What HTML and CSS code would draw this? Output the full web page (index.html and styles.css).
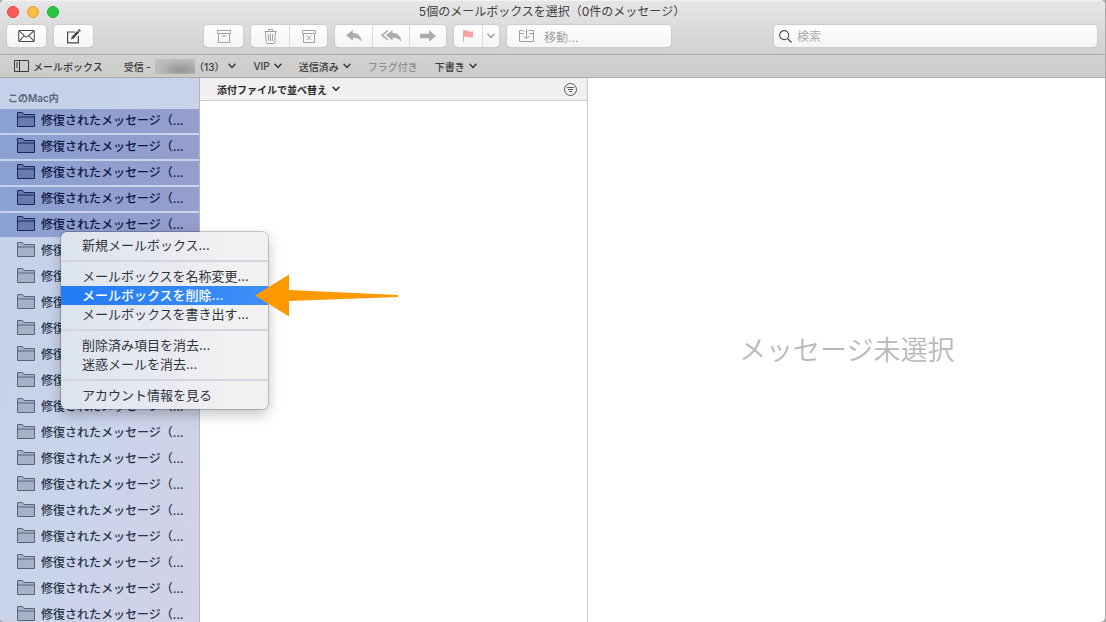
FILE: index.html
```
<!DOCTYPE html>
<html lang="ja">
<head>
    <meta charset="UTF-8">
    <meta name="viewport" content="width=device-width, initial-scale=1.0">
    <title>メール</title>
    <link rel="stylesheet" href="styles.css">
</head>
<body>
    <svg class="symbols" aria-hidden="true">
        <symbol id="folder" viewBox="0 0 18 15">
            <path d="M.5 14.5V.5H5.5L7 2.5H17.5V14.5Z" fill="currentColor" fill-opacity=".3" stroke="currentColor"/>
            <path d="M.5 5H17.5" stroke="currentColor"/>
        </symbol>
        <symbol id="chevron" viewBox="0 0 8 6">
            <path d="M1 1.2L4 4.4L7 1.2" fill="none" stroke="currentColor" stroke-width="1.5" stroke-linecap="round"/>
        </symbol>
    </svg>
    <div class="window">
        <header class="titlebar">
            <div class="title-row">
                <div class="lights">
                    <button class="light red" aria-label="閉じる"></button>
                    <button class="light yellow" aria-label="しまう"></button>
                    <button class="light green" aria-label="拡大"></button>
                </div>
                <h1 class="title">5個のメールボックスを選択（0件のメッセージ）</h1>
            </div>
            <div class="toolbar">
                <button class="tool dark" aria-label="受信">
                    <svg width="17" height="12" viewBox="0 0 18 13" fill="none" stroke="currentColor" stroke-width="1.1"><rect x=".6" y=".6" width="16.8" height="11.8" rx="1"/><path d="M1 1L7.5 7Q9 8.3 10.5 7L17 1M1 12L6.3 6.2M17 12L11.7 6.2"/></svg>
                </button>
                <button class="tool dark" aria-label="新規メッセージ">
                    <svg width="16" height="15" viewBox="0 0 16 15" fill="none" stroke="currentColor" stroke-width="1.2"><path d="M9 3H1.6V13.9H12.4V7"/><path d="M6.2 9.2L12.3 2.7" stroke-width="2.6"/><path d="M12.8 2.2L14 .9" stroke-width="2.6"/><path d="M4.8 10.6L7.3 9.8L5.8 8.2Z" fill="currentColor" stroke="none"/></svg>
                </button>
                <button class="tool archive" aria-label="アーカイブ">
                    <svg width="14" height="13" viewBox="0 0 14 13" fill="none" stroke="currentColor"><path d="M.5 .5H13.5V3.5H.5ZM1.5 3.5V12.5H12.5V3.5M4.5 6H9.5"/></svg>
                </button>
                <div class="group">
                    <button class="tool" aria-label="削除">
                        <svg width="13" height="15" viewBox="0 0 13 15" fill="none" stroke="currentColor"><path d="M.5 2.5H12.5M4.5 2.5V.5H8.5V2.5M1.5 2.5L2.2 13.4Q2.3 14.5 3.3 14.5H9.7Q10.7 14.5 10.8 13.4L11.5 2.5M4.3 5L4.7 12M6.5 5V12M8.7 5L8.3 12"/></svg>
                    </button>
                    <button class="tool" aria-label="迷惑メール">
                        <svg width="14" height="13" viewBox="0 0 14 13" fill="none" stroke="currentColor"><path d="M.5 .5H13.5V3.5H.5ZM1.5 3.5V12.5H12.5V3.5M4.8 5.5L9.2 10M9.2 5.5L4.8 10"/></svg>
                    </button>
                </div>
                <div class="group reply">
                    <button class="tool" aria-label="返信">
                        <svg width="16" height="12" viewBox="0 0 16 12" fill="currentColor"><path d="M0 5.2L6.8 0V3.1C12 3.1 15 6 15.7 12C13.6 8.8 11 7.6 6.8 7.7V10.5Z"/></svg>
                    </button>
                    <button class="tool" aria-label="全員に返信">
                        <svg width="21" height="12" viewBox="0 0 21 12" fill="currentColor"><path d="M4.8 5.2L11.6 0V3.1C16.8 3.1 19.8 6 20.5 12C18.4 8.8 15.8 7.6 11.6 7.7V10.5Z"/><path d="M7 .5L1 5.2L7 10" fill="none" stroke="currentColor" stroke-width="1.6"/></svg>
                    </button>
                    <button class="tool" aria-label="転送">
                        <svg width="16" height="12" viewBox="0 0 16 12" fill="currentColor"><path d="M0 3.8H9V.3L16 6L9 11.7V8.2H0Z"/></svg>
                    </button>
                </div>
                <div class="group flag">
                    <button class="tool pink" aria-label="フラグ">
                        <svg width="10" height="12" viewBox="0 0 10 12" fill="currentColor"><path d="M0 .5Q2.5 -.5 5 1T10 1V7Q7.5 8.2 5 7T1 7V12H0Z"/></svg>
                    </button>
                    <button class="tool narrow" aria-label="フラグの色">
                        <svg width="8" height="6"><use href="#chevron"/></svg>
                    </button>
                </div>
                <button class="tool move">
                    <svg width="15" height="14" viewBox="0 0 15 14" fill="none" stroke="currentColor"><path d="M5.5 2.5H5L4 1.5H.5V12.5H14.5V1.5H10L9 2.5M.5 4.5H5M10 4.5H14.5M7.5 0V9.5M4.5 6.8L7.5 9.8L10.5 6.8"/></svg>
                    <span>移動...</span>
                </button>
                <label class="search">
                    <svg width="13" height="13" viewBox="0 0 13 13" fill="none" stroke="currentColor" stroke-width="1.2"><circle cx="5.2" cy="5.2" r="4.5"/><path d="M8.5 8.5L12.5 12.5"/></svg>
                    <input type="search" placeholder="検索" aria-label="検索">
                </label>
            </div>
        </header>
        <nav class="favorites">
            <button class="fav mailboxes">
                <svg width="15" height="12" viewBox="0 0 15 12" fill="none" stroke="currentColor"><path d="M.5 .5H14.5V11.5H.5ZM5.5 .5V11.5M2 3H4M2 5H4M2 7H4"/></svg>
                メールボックス
            </button>
            <button class="fav inbox">受信 - <span class="redacted"></span>（13）<svg width="8" height="6"><use href="#chevron"/></svg></button>
            <button class="fav">VIP <svg width="8" height="6"><use href="#chevron"/></svg></button>
            <button class="fav">送信済み <svg width="8" height="6"><use href="#chevron"/></svg></button>
            <button class="fav" disabled>フラグ付き</button>
            <button class="fav">下書き <svg width="8" height="6"><use href="#chevron"/></svg></button>
        </nav>
        <main class="content">
            <aside class="sidebar">
                <h2 class="section">このMac内</h2>
                <button class="mailbox selected"><svg><use href="#folder"/></svg>修復されたメッセージ（...</button>
                <button class="mailbox selected"><svg><use href="#folder"/></svg>修復されたメッセージ（...</button>
                <button class="mailbox selected"><svg><use href="#folder"/></svg>修復されたメッセージ（...</button>
                <button class="mailbox selected"><svg><use href="#folder"/></svg>修復されたメッセージ（...</button>
                <button class="mailbox selected"><svg><use href="#folder"/></svg>修復されたメッセージ（...</button>
                <button class="mailbox"><svg><use href="#folder"/></svg>修復されたメッセージ（...</button>
                <button class="mailbox"><svg><use href="#folder"/></svg>修復されたメッセージ（...</button>
                <button class="mailbox"><svg><use href="#folder"/></svg>修復されたメッセージ（...</button>
                <button class="mailbox"><svg><use href="#folder"/></svg>修復されたメッセージ（...</button>
                <button class="mailbox"><svg><use href="#folder"/></svg>修復されたメッセージ（...</button>
                <button class="mailbox"><svg><use href="#folder"/></svg>修復されたメッセージ（...</button>
                <button class="mailbox"><svg><use href="#folder"/></svg>修復されたメッセージ（...</button>
                <button class="mailbox"><svg><use href="#folder"/></svg>修復されたメッセージ（...</button>
                <button class="mailbox"><svg><use href="#folder"/></svg>修復されたメッセージ（...</button>
                <button class="mailbox"><svg><use href="#folder"/></svg>修復されたメッセージ（...</button>
                <button class="mailbox"><svg><use href="#folder"/></svg>修復されたメッセージ（...</button>
                <button class="mailbox"><svg><use href="#folder"/></svg>修復されたメッセージ（...</button>
                <button class="mailbox"><svg><use href="#folder"/></svg>修復されたメッセージ（...</button>
                <button class="mailbox"><svg><use href="#folder"/></svg>修復されたメッセージ（...</button>
                <button class="mailbox"><svg><use href="#folder"/></svg>修復されたメッセージ（...</button>
            </aside>
            <section class="messages">
                <div class="sortbar">
                    <button class="sort">添付ファイルで並べ替え <svg width="8" height="6"><use href="#chevron"/></svg></button>
                    <button class="filter" aria-label="フィルタ">
                        <svg width="13" height="13" viewBox="0 0 13 13" fill="none" stroke="currentColor"><circle cx="6.5" cy="6.5" r="6"/><path d="M3 4.5H10M4 6.5H9M5.2 8.5H7.8"/></svg>
                    </button>
                </div>
            </section>
            <section class="preview">
                <p class="empty">メッセージ未選択</p>
            </section>
        </main>
    </div>
    <div class="menu" role="menu">
        <button class="item" role="menuitem">新規メールボックス...</button>
        <hr>
        <button class="item" role="menuitem">メールボックスを名称変更...</button>
        <button class="item active" role="menuitem">メールボックスを削除...</button>
        <button class="item" role="menuitem">メールボックスを書き出す...</button>
        <hr>
        <button class="item" role="menuitem">削除済み項目を消去...</button>
        <button class="item" role="menuitem">迷惑メールを消去...</button>
        <hr>
        <button class="item" role="menuitem">アカウント情報を見る</button>
    </div>
    <svg class="arrow" width="144" height="44" viewBox="0 0 144 44" fill="#ff9900" aria-hidden="true">
        <path d="M0 21.5L34 .5V16L143 21V23L34 27V42.5Z"/>
    </svg>
</body>
</html>
```
FILE: styles.css
```
* {
    box-sizing: border-box;
}
body {
    margin: 0;
    height: 100vh;
    overflow: hidden;
    position: relative;
    background: #a9a9ad;
    font-family: Inter, "Noto Sans CJK JP", sans-serif;
    font-size: 12px;
    color: #2b2b2b;
}
button {
    font: inherit;
    color: inherit;
    border: 0;
    padding: 0;
    margin: 0;
    background: none;
    white-space: nowrap;
}
svg {
    flex: none;
}
.symbols {
    position: absolute;
    width: 0;
    height: 0;
}
.window {
    display: flex;
    flex-direction: column;
    height: 100%;
    margin-right: 1px;
    border-radius: 5px;
    overflow: hidden;
    background: #fff;
}

/* title and toolbar */
.titlebar {
    flex: none;
    height: 55px;
    background: linear-gradient(#e6e6e6, #d1d1d1);
    border-top: 1px solid #f2f2f2;
    border-bottom: 1px solid #adadad;
}
.title-row {
    display: grid;
    grid-template-columns: 1fr auto 1fr;
    align-items: center;
    height: 22px;
    padding: 0 8px 0 7px;
}
.lights {
    display: flex;
    gap: 8px;
}
.light {
    width: 12px;
    height: 12px;
    border-radius: 50%;
}
.red {
    background: #fc5b57;
    border: 1px solid #df4744;
}
.yellow {
    background: #fdbc40;
    border: 1px solid #de9f34;
}
.green {
    background: #27c840;
    border: 1px solid #1fa833;
}
.title {
    margin: 0;
    font-size: 12px;
    font-weight: 400;
    line-height: 20px;
    color: #404040;
}
.toolbar {
    display: flex;
    gap: 8px;
    padding: 2px 8px 0 7px;
}
.tool {
    display: flex;
    align-items: center;
    justify-content: center;
    width: 39px;
    height: 22px;
    color: #a0a0a0;
}
.toolbar > .tool,
.group,
.search {
    background: linear-gradient(#fff, #f4f4f4);
    border-radius: 4px;
    box-shadow: 0 0 0 1px #cdcdcd, 0 1px 1px #a8a8a8;
}
.toolbar > .dark {
    color: #484848;
}
.archive {
    margin-left: 103px;
}
.group {
    display: flex;
}
.group .tool {
    width: 38px;
}
.group .tool + .tool {
    border-left: 1px solid #dadada;
}
.reply .tool {
    width: 37px;
    color: #ababab;
}
.flag .pink {
    width: 28px;
    color: #f9a3a0;
}
.flag .narrow {
    width: 17px;
}
.toolbar > .move {
    width: 164px;
    justify-content: flex-start;
    gap: 10px;
    padding-left: 12px;
}
.search {
    flex: 1;
    display: flex;
    align-items: center;
    gap: 5px;
    height: 22px;
    margin-left: 95px;
    padding: 0 5px;
    color: #505050;
}
.search input {
    flex: 1;
    min-width: 0;
    padding: 0;
    border: 0;
    outline: 0;
    background: none;
    font: inherit;
}
.search input::placeholder {
    color: #ababab;
}

/* favorites bar */
.favorites {
    flex: none;
    display: flex;
    align-items: center;
    gap: 17px;
    height: 23px;
    padding-left: 14px;
    background: linear-gradient(#d2d2d2, #cbcbcb);
    border-bottom: 1px solid #a9a9a9;
}
.fav {
    display: flex;
    align-items: center;
    gap: 4px;
    font-size: 10px;
    font-weight: 500;
    color: #3a3a3a;
}
.fav:disabled {
    color: #8e8e8e;
}
.mailboxes {
    margin-right: 4px;
}
.redacted {
    width: 40px;
    height: 15px;
    margin-right: -5px;
    background: radial-gradient(ellipse at 65% 70%, #999 10%, #b4b4b4 50%, #bfbfbf 80%);
}

/* three columns */
.content {
    flex: 1;
    display: flex;
    min-height: 0;
}
.sidebar {
    flex: none;
    display: flex;
    flex-direction: column;
    width: 200px;
    overflow: hidden;
    border-right: 1px solid #b3b6c9;
    background: linear-gradient(110deg, #c3d1ea 0%, #cad4e9 60%, #d3d2e6 100%);
}
.section {
    flex: none;
    margin: 0;
    padding: 10px 8px 0;
    height: 31px;
    font-size: 10px;
    font-weight: 600;
    line-height: 20px;
    color: #5b6577;
}
.mailbox {
    flex: none;
    display: flex;
    align-items: center;
    gap: 6px;
    height: 24px;
    margin-bottom: 2px;
    padding: 0 0 4px 17px;
    font-weight: 500;
    color: #26324a;
}
.mailbox svg {
    width: 18px;
    height: 15px;
    color: #56647c;
}
.mailbox.selected {
    background: linear-gradient(90deg, #8ba1d3, #959ecc);
    color: #0b163f;
}
.mailbox.selected svg {
    color: #15295c;
}
.messages {
    flex: 3;
    border-right: 1px solid #c6c6c6;
}
.sortbar {
    display: flex;
    align-items: center;
    justify-content: space-between;
    height: 23px;
    padding: 0 10px 0 17px;
    background: #f0f0f0;
    border-bottom: 1px solid #cfcfcf;
}
.sort {
    display: flex;
    align-items: center;
    gap: 5px;
    font-size: 10px;
    font-weight: 600;
}
.filter {
    display: flex;
    color: #5c5c5c;
}
.preview {
    flex: 4;
    display: flex;
    align-items: center;
    justify-content: center;
    padding-bottom: 4px;
}
.empty {
    margin: 0;
    font-size: 27px;
    font-weight: 350;
    color: #b9b9b9;
}

/* context menu over the sidebar */
.menu {
    position: absolute;
    left: 61px;
    top: 232px;
    width: 207px;
    padding: 4px 0;
    border-radius: 6px;
    background: linear-gradient(90deg, #dde3ee, #e9eaf1 50%, #f1f1f2 80%);
    box-shadow: 0 0 0 1px rgba(0, 0, 0, 0.2), 0 5px 14px rgba(0, 0, 0, 0.25);
}
.item {
    display: block;
    width: 100%;
    height: 19px;
    padding-left: 21px;
    font-size: 13px;
    line-height: 19px;
    text-align: left;
    color: #30343c;
}
.item.active {
    background: linear-gradient(90deg, #237bf6, #3d90f8);
    color: #fff;
    font-weight: 500;
}
.menu hr {
    height: 2px;
    margin: 5px 0;
    border: 0;
    background: #d2d5dc;
}
.arrow {
    position: absolute;
    left: 255px;
    top: 274px;
}
```
